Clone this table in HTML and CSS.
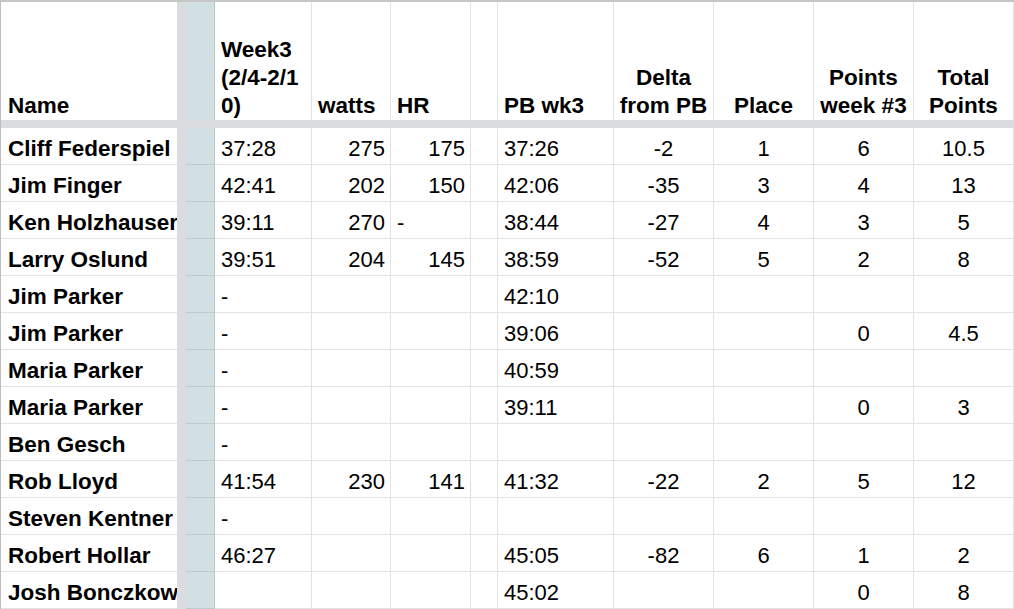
FILE: index.html
```html
<!DOCTYPE html>
<html>
<head>
<meta charset="utf-8">
<link rel="stylesheet" href="styles.css">
</head>
<body>
<div class="sheet">
  <div class="c h name">Name</div><div class="bar"></div><div class="frz hf"></div>
  <div class="c h">Week3<br>(2/4-2/1<br>0)</div><div class="c h">watts</div><div class="c h">HR</div><div class="c h"></div><div class="c h">PB wk3</div>
  <div class="c h ctr">Delta<br>from PB</div><div class="c h ctr">Place</div><div class="c h ctr">Points<br>week #3</div><div class="c h ctr last">Total<br>Points</div>

  <div class="hbar"></div>

  <div class="c name">Cliff Federspiel</div><div class="bar"></div><div class="frz"></div>
  <div class="c">37:28</div><div class="c r">275</div><div class="c r">175</div><div class="c"></div><div class="c">37:26</div>
  <div class="c ctr">-2</div><div class="c ctr">1</div><div class="c ctr">6</div><div class="c ctr last">10.5</div>

  <div class="c name">Jim Finger</div><div class="bar"></div><div class="frz"></div>
  <div class="c">42:41</div><div class="c r">202</div><div class="c r">150</div><div class="c"></div><div class="c">42:06</div>
  <div class="c ctr">-35</div><div class="c ctr">3</div><div class="c ctr">4</div><div class="c ctr last">13</div>

  <div class="c name">Ken Holzhauser</div><div class="bar"></div><div class="frz"></div>
  <div class="c">39:11</div><div class="c r">270</div><div class="c">-</div><div class="c"></div><div class="c">38:44</div>
  <div class="c ctr">-27</div><div class="c ctr">4</div><div class="c ctr">3</div><div class="c ctr last">5</div>

  <div class="c name">Larry Oslund</div><div class="bar"></div><div class="frz"></div>
  <div class="c">39:51</div><div class="c r">204</div><div class="c r">145</div><div class="c"></div><div class="c">38:59</div>
  <div class="c ctr">-52</div><div class="c ctr">5</div><div class="c ctr">2</div><div class="c ctr last">8</div>

  <div class="c name">Jim Parker</div><div class="bar"></div><div class="frz"></div>
  <div class="c">-</div><div class="c r"></div><div class="c r"></div><div class="c"></div><div class="c">42:10</div>
  <div class="c ctr"></div><div class="c ctr"></div><div class="c ctr"></div><div class="c ctr last"></div>

  <div class="c name">Jim Parker</div><div class="bar"></div><div class="frz"></div>
  <div class="c">-</div><div class="c r"></div><div class="c r"></div><div class="c"></div><div class="c">39:06</div>
  <div class="c ctr"></div><div class="c ctr"></div><div class="c ctr">0</div><div class="c ctr last">4.5</div>

  <div class="c name">Maria Parker</div><div class="bar"></div><div class="frz"></div>
  <div class="c">-</div><div class="c r"></div><div class="c r"></div><div class="c"></div><div class="c">40:59</div>
  <div class="c ctr"></div><div class="c ctr"></div><div class="c ctr"></div><div class="c ctr last"></div>

  <div class="c name">Maria Parker</div><div class="bar"></div><div class="frz"></div>
  <div class="c">-</div><div class="c r"></div><div class="c r"></div><div class="c"></div><div class="c">39:11</div>
  <div class="c ctr"></div><div class="c ctr"></div><div class="c ctr">0</div><div class="c ctr last">3</div>

  <div class="c name">Ben Gesch</div><div class="bar"></div><div class="frz"></div>
  <div class="c">-</div><div class="c r"></div><div class="c r"></div><div class="c"></div><div class="c"></div>
  <div class="c ctr"></div><div class="c ctr"></div><div class="c ctr"></div><div class="c ctr last"></div>

  <div class="c name">Rob Lloyd</div><div class="bar"></div><div class="frz"></div>
  <div class="c">41:54</div><div class="c r">230</div><div class="c r">141</div><div class="c"></div><div class="c">41:32</div>
  <div class="c ctr">-22</div><div class="c ctr">2</div><div class="c ctr">5</div><div class="c ctr last">12</div>

  <div class="c name">Steven Kentner</div><div class="bar"></div><div class="frz"></div>
  <div class="c">-</div><div class="c r"></div><div class="c r"></div><div class="c"></div><div class="c"></div>
  <div class="c ctr"></div><div class="c ctr"></div><div class="c ctr"></div><div class="c ctr last"></div>

  <div class="c name">Robert Hollar</div><div class="bar"></div><div class="frz"></div>
  <div class="c">46:27</div><div class="c r"></div><div class="c r"></div><div class="c"></div><div class="c">45:05</div>
  <div class="c ctr">-82</div><div class="c ctr">6</div><div class="c ctr">1</div><div class="c ctr last">2</div>

  <div class="c name">Josh Bonczkow</div><div class="bar"></div><div class="frz"></div>
  <div class="c"></div><div class="c r"></div><div class="c r"></div><div class="c"></div><div class="c">45:02</div>
  <div class="c ctr"></div><div class="c ctr"></div><div class="c ctr">0</div><div class="c ctr last">8</div>
</div>
</body>
</html>
```

FILE: styles.css
```css
* { box-sizing: border-box; }
html, body { margin: 0; padding: 0; background: #ffffff; }
body { width: 1014px; height: 609px; overflow: hidden; }

.sheet {
  display: grid;
  grid-template-columns: 176px 9px 29px 97px 79px 80px 27px 116px 100px 100px 100px 100px;
  grid-template-rows: 118px 8px repeat(13, 37px);
  border-top: 2px solid #c6c6c6;
  border-left: 1px solid #bdbdbd;
  width: 1014px;
  font-family: "Liberation Sans", Arial, sans-serif;
  font-size: 22px;
  line-height: 27px;
  color: #000;
}

.c {
  display: flex;
  align-items: flex-end;
  justify-content: flex-start;
  padding: 0 6px 2px 6px;
  border-right: 1px solid #e2e2e2;
  border-bottom: 1px solid #e2e2e2;
  white-space: nowrap;
  overflow: hidden;
  min-width: 0;
}

.c.r { justify-content: flex-end; padding-right: 5px; }
.c.ctr { justify-content: center; text-align: center; padding-left: 2px; padding-right: 2px; }

.c.h { font-weight: bold; font-size: 22.5px; line-height: 28px; border-bottom: none; padding-bottom: 0; }
.c.name { font-weight: bold; font-size: 22.5px; border-right: none; padding-left: 7px; padding-right: 0; }

.bar { background: #dadce0; }
.frz {
  background: #d0e0e3;
  border-right: 1px solid #b9c6c9;
  border-bottom: 1px solid #bccbcf;
}
.frz.hf { border-bottom: none; }

.hbar { grid-column: 1 / -1; background: #dadce0; }
```
